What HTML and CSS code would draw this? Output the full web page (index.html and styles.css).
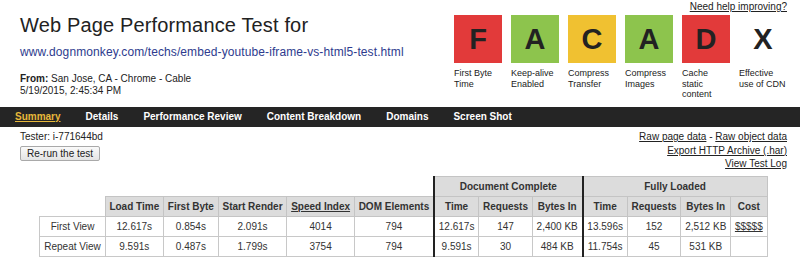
FILE: index.html
```html
<!DOCTYPE html>
<html lang="en">
<head>
<meta charset="utf-8">
<title>Web Page Performance Test</title>
<link rel="stylesheet" href="styles.css">
</head>
<body>
<header class="header">
  <div class="info">
    <h1 class="title">Web Page Performance Test for</h1>
    <a class="url" href="#">www.dognmonkey.com/techs/embed-youtube-iframe-vs-html5-test.html</a>
    <div class="from"><b>From:</b> San Jose, CA - Chrome - Cable</div>
    <div class="date">5/19/2015, 2:45:34 PM</div>
  </div>
  <div class="help-col">
    <a class="help" href="#">Need help improving?</a>
    <ul class="grades">
      <li class="grade"><div class="box red">F</div><div class="label">First Byte<br>Time</div></li>
      <li class="grade"><div class="box green">A</div><div class="label">Keep-alive<br>Enabled</div></li>
      <li class="grade"><div class="box yellow">C</div><div class="label">Compress<br>Transfer</div></li>
      <li class="grade"><div class="box green">A</div><div class="label">Compress<br>Images</div></li>
      <li class="grade"><div class="box red">D</div><div class="label">Cache<br>static<br>content</div></li>
      <li class="grade"><div class="box">X</div><div class="label">Effective<br>use of CDN</div></li>
    </ul>
  </div>
</header>
<nav class="nav">
  <a class="active" href="#">Summary</a>
  <a href="#">Details</a>
  <a href="#">Performance Review</a>
  <a href="#">Content Breakdown</a>
  <a href="#">Domains</a>
  <a href="#">Screen Shot</a>
</nav>
<main class="main">
  <div class="sub">
    <div class="tester">
      <div>Tester: i-771644bd</div>
      <button class="btn" type="button">Re-run the test</button>
    </div>
    <div class="links">
      <div><a href="#">Raw page data</a> - <a href="#">Raw object data</a></div>
      <div><a href="#">Export HTTP Archive (.har)</a></div>
      <div><a href="#">View Test Log</a></div>
    </div>
  </div>
  <table class="results">
    <thead>
      <tr class="group-row">
        <th class="blank" colspan="6"></th>
        <th class="grp g" colspan="3">Document Complete</th>
        <th class="grp g" colspan="4">Fully Loaded</th>
      </tr>
      <tr class="col-row">
        <th class="blank"></th>
        <th>Load Time</th>
        <th>First Byte</th>
        <th>Start Render</th>
        <th><a href="#">Speed Index</a></th>
        <th>DOM Elements</th>
        <th class="g">Time</th>
        <th>Requests</th>
        <th>Bytes In</th>
        <th class="g">Time</th>
        <th>Requests</th>
        <th>Bytes In</th>
        <th>Cost</th>
      </tr>
    </thead>
    <tbody>
      <tr>
        <td class="rowlabel">First View</td>
        <td>12.617s</td>
        <td>0.854s</td>
        <td>2.091s</td>
        <td>4014</td>
        <td>794</td>
        <td class="g">12.617s</td>
        <td>147</td>
        <td>2,400 KB</td>
        <td class="g">13.596s</td>
        <td>152</td>
        <td>2,512 KB</td>
        <td><a href="#">$$$$$</a></td>
      </tr>
      <tr>
        <td class="rowlabel">Repeat View</td>
        <td>9.591s</td>
        <td>0.487s</td>
        <td>1.799s</td>
        <td>3754</td>
        <td>794</td>
        <td class="g">9.591s</td>
        <td>30</td>
        <td>484 KB</td>
        <td class="g">11.754s</td>
        <td>45</td>
        <td>531 KB</td>
        <td></td>
      </tr>
    </tbody>
  </table>
</main>
</body>
</html>
```

FILE: styles.css
```css
* {
  box-sizing: border-box;
}

body {
  margin: 0;
  background: #fff;
  color: #222;
  font-family: "Liberation Sans", Arial, Helvetica, sans-serif;
  font-size: 10px;
}

a {
  color: #222;
}

.header {
  display: flex;
  justify-content: space-between;
  align-items: flex-start;
  height: 107px;
  padding: 1px 13px 0 20px;
}

.info {
  margin-top: 12px;
}

.title {
  margin: 0;
  font-size: 20px;
  font-weight: normal;
  letter-spacing: 0.15px;
  line-height: 24px;
  color: #222;
}

.url {
  display: block;
  margin-top: 8px;
  font-size: 12px;
  letter-spacing: 0.1px;
  line-height: 15px;
  color: #2e3b8e;
  text-decoration: none;
}

.from {
  margin-top: 13px;
  line-height: 12px;
}

.date {
  line-height: 12px;
}

.help-col {
  display: flex;
  flex-direction: column;
  align-items: flex-end;
}

.help {
  line-height: 12px;
}

.grades {
  display: flex;
  gap: 9px;
  margin: 2px 0 0;
  padding: 0;
  list-style: none;
}

.grade {
  width: 48px;
}

.box {
  height: 48px;
  font-size: 29px;
  font-weight: bold;
  line-height: 48px;
  text-align: center;
  color: #222;
}

.red {
  background: #e23a3a;
}

.green {
  background: #8dc44d;
}

.yellow {
  background: #f0c131;
}

.label {
  margin-top: 5px;
  font-size: 9px;
  line-height: 10.5px;
  white-space: nowrap;
}

.nav {
  display: flex;
  gap: 25px;
  height: 20px;
  padding-left: 15px;
  background: #252525;
  line-height: 20px;
}

.nav a {
  color: #fff;
  font-weight: bold;
  text-decoration: none;
}

.nav a.active {
  color: #e8b83a;
  text-decoration: underline;
}

.main {
  padding: 3px 13px 0 20px;
}

.sub {
  display: flex;
  justify-content: space-between;
  align-items: flex-start;
}

.tester {
  line-height: 13px;
}

.btn {
  display: block;
  margin-top: 3px;
  padding: 1px 6px;
  border: 1px solid #a9a9a9;
  border-radius: 2px;
  background: linear-gradient(#fafafa, #e4e4e4);
  color: #222;
  font-family: inherit;
  font-size: 10px;
  line-height: 11px;
}

.links {
  text-align: right;
  line-height: 13.5px;
}

.results {
  margin: 5.5px auto 0;
  border-collapse: collapse;
  color: #333;
}

.results th,
.results td {
  padding: 0 3.8px;
  font-size: 10px;
  text-align: center;
  white-space: nowrap;
}

.results th {
  height: 20px;
  line-height: 19px;
  background: #dcdcdc;
  border: 1px solid #c4c4c4;
  color: #333;
}

.results td {
  height: 20px;
  line-height: 19px;
  border: 1px solid #c8c8c8;
  font-weight: normal;
}

.results th.blank {
  background: none;
  border: none;
}

.results .g {
  border-left: 2px solid #222;
}

.results a {
  color: #333;
}
```
